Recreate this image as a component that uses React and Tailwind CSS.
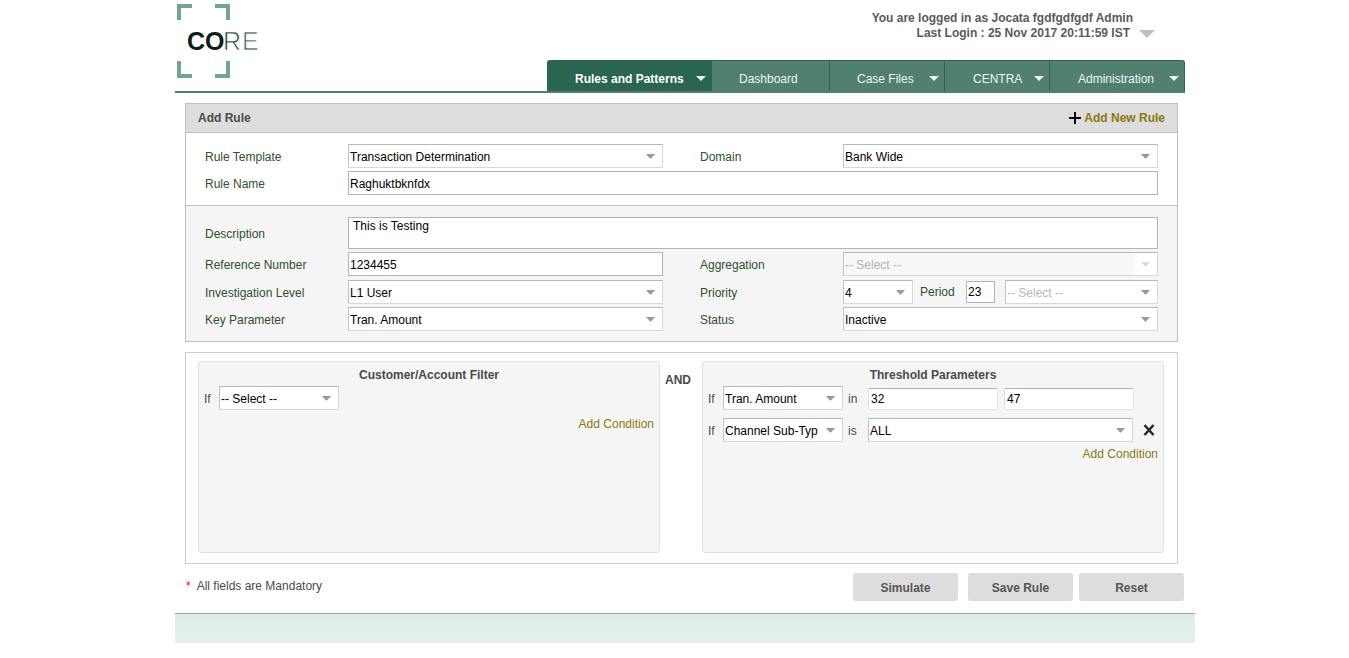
import React from "react";

const OPEN = "border-t-[#b8b8b8] border-l-[#c4c4c4] border-r-[#d8d8d8] border-b-[#d8d8d8]";

function Caret({ className }) {
  return (
    <svg viewBox="0 0 9 5" className={className} fill="currentColor" aria-hidden="true">
      <path d="M0 0H9L5 4.5H4Z" />
    </svg>
  );
}

function Select({ id, label, options, className = "", disabled = false, muted = false }) {
  return (
    <div className={"relative " + className}>
      <select
        id={id}
        aria-label={label}
        disabled={disabled}
        className={
          "block h-6 w-full appearance-none rounded-none border pl-px pr-6 pt-px opacity-100 " +
          OPEN + " " +
          (disabled ? "bg-[#f8f8f8] text-[#b0b0b0]" : muted ? "bg-white text-[#b8b8b8]" : "bg-white text-black")
        }
      >
        {options.map((o) => (
          <option key={o}>{o}</option>
        ))}
      </select>
      <span
        className={
          "pointer-events-none absolute inset-y-px right-px flex w-[22px] items-center pl-[6px] " +
          (disabled ? "bg-white text-[#dcdcdc]" : "text-[#999]")
        }
      >
        <Caret className="h-[5px] w-[9px]" />
      </span>
    </div>
  );
}

function Field({ id, label, children }) {
  return (
    <div className="flex min-w-0 flex-1 items-center">
      <label htmlFor={id} className="w-[143px] shrink-0 pt-0.5 text-[#2f4f2f]">{label}</label>
      {children}
    </div>
  );
}

const inputBase = "h-6 border border-[#b4b4b4] bg-white px-px pt-px text-black";

function NavItem({ children, caret = true, active = false, className }) {
  return (
    <a
      href="#"
      aria-current={active ? "page" : undefined}
      className={
        "flex items-center border-t border-[#2a6552] pt-1.5 " +
        (active ? "bg-[#2a6552] font-bold text-white " : "bg-[#518071] text-[#eef5f2] ") +
        className
      }
    >
      <span>{children}</span>
      {caret && (
        <svg viewBox="0 0 10 5" className="mb-px ml-auto h-[5px] w-[10px]" fill="#eef0fa" aria-hidden="true">
          <path d="M0 0H10L5 5Z" />
        </svg>
      )}
    </a>
  );
}

function Logo() {
  return (
    <svg viewBox="0 0 84 76" className="ml-[2px] mt-[3px] h-[76px] w-[84px]" role="img" aria-label="CORE">
      <g fill="none" stroke="#6fa594" strokeWidth="4">
        <path d="M15 3H2V17" />
        <path d="M38 3H51V17" />
        <path d="M15 73H2V58" />
        <path d="M38 73H51V58" />
      </g>
      <text y="47" fontFamily="Liberation Sans, sans-serif" fontSize="25" fontWeight="700" fill="#0c1c16">
        <tspan x="10">C</tspan>
        <tspan x="28">O</tspan>
      </text>
      <text y="47" fontFamily="Liberation Sans, sans-serif" fontSize="25" stroke="#fff" strokeWidth="0.7">
        <tspan x="46" fill="#1d3b30">R</tspan>
        <tspan x="65" fill="#4d685f">E</tspan>
      </text>
    </svg>
  );
}

function Condition({ id, options, joiner, children }) {
  return (
    <div className="flex h-6 items-center">
      <label htmlFor={id} className="w-[15px] shrink-0 pt-0.5">If</label>
      <Select id={id} options={options} className="w-[120px] shrink-0" />
      {joiner && <span className="w-[25px] shrink-0 pl-[5px] pt-0.5">{joiner}</span>}
      {children}
    </div>
  );
}

function ConditionPanel({ title, children }) {
  return (
    <section className="min-h-[192px] min-w-0 flex-1 rounded-[3px] border border-[#e0e0e0] bg-[#f5f5f5] px-[5px] pt-[5px]">
      <h2 className="mb-[3px] text-center font-bold leading-4">{title}</h2>
      {children}
    </section>
  );
}

const buttonClass = "h-7 w-[105px] rounded-[3px] bg-[#ddd] pt-0.5 font-bold text-[#555]";
const boundClass =
  "h-[22px] w-[130px] rounded-xs border border-[#dcdfe4] border-t-[#b0b4ba] bg-white px-[2px] text-black";

export default function App() {
  return (
    <div className="min-h-screen bg-white pl-[21px] font-['Liberation_Sans',Arial,sans-serif] text-[12px] leading-4 text-[#4a4a4a]">
      <div className="mx-auto max-w-[1020px]">
        <div className="pr-[10px]">
          <header className="flex h-[93px] justify-between border-b-2 border-[#518071]">
            <Logo />
            <div className="flex flex-col items-end justify-between">
              <div className="pr-[30px] pt-[11px] text-right font-bold leading-[15px] text-[#5a5a5a]">
                <p className="pr-[22px]">You are logged in as Jocata fgdfgdfgdf Admin</p>
                <p className="flex items-center justify-end gap-[9px]">
                  Last Login : 25 Nov 2017 20:11:59 IST
                  <button type="button" aria-label="Account menu">
                    <svg viewBox="0 0 16 8" className="h-2 w-4" fill="#c0c0c0">
                      <path d="M0 0H16L8 8Z" />
                    </svg>
                  </button>
                </p>
              </div>
              <nav className="flex h-[31px]">
                <NavItem active className="w-[165px] rounded-tl-[3px] pl-7 pr-[6px]">Rules and Patterns</NavItem>
                <NavItem caret={false} className="w-[118px] border-r pl-[27px]">Dashboard</NavItem>
                <NavItem className="w-[115px] border-r pl-[27px] pr-[5px]">Case Files</NavItem>
                <NavItem className="w-[105px] border-r pl-7 pr-[5px]">CENTRA</NavItem>
                <NavItem className="w-[135px] rounded-tr-[3px] border-r pl-7 pr-[5px]">Administration</NavItem>
              </nav>
            </div>
          </header>

          <main className="pt-[10px]">
            <div className="ml-[10px] mr-[7px]">
              <section className="border border-[#bfbfbf]">
                <div className="flex h-[29px] items-center justify-between border-b border-[#bfbfbf] bg-[#ddd] px-3 font-bold">
                  <h1 className="text-[#4a4a4a]">Add Rule</h1>
                  <a href="#" className="flex items-center gap-[3px] text-[#8a7a0a]">
                    <svg viewBox="0 0 12 12" className="size-3" stroke="#000" strokeWidth="2">
                      <path d="M6 0V12M0 6H12" />
                    </svg>
                    Add New Rule
                  </a>
                </div>
                <div className="flex flex-col gap-[3px] border-b border-[#bfbfbf] px-[19px] pb-[10px] pt-[11px]">
                  <div className="flex gap-[37px]">
                    <Field id="template" label="Rule Template">
                      <Select id="template" options={["Transaction Determination"]} className="flex-1" />
                    </Field>
                    <Field id="domain" label="Domain">
                      <Select id="domain" options={["Bank Wide"]} className="flex-1" />
                    </Field>
                  </div>
                  <Field id="name" label="Rule Name">
                    <input id="name" defaultValue="Raghuktbknfdx" className={inputBase + " min-w-0 flex-1"} />
                  </Field>
                </div>
                <div className="flex flex-col gap-[3px] bg-[#f5f5f5] px-[19px] pb-[10px] pt-[11px]">
                  <Field id="description" label="Description">
                    <textarea
                      id="description"
                      defaultValue="This is Testing"
                      className="block h-8 min-w-0 flex-1 resize-none border border-[#b4b4b4] bg-white px-1 text-black"
                    />
                  </Field>
                  <div className="mb-px flex gap-[37px]">
                    <Field id="reference" label="Reference Number">
                      <input id="reference" defaultValue="1234455" className={inputBase + " min-w-0 flex-1"} />
                    </Field>
                    <Field id="aggregation" label="Aggregation">
                      <Select id="aggregation" options={["-- Select --"]} disabled className="flex-1" />
                    </Field>
                  </div>
                  <div className="flex gap-[37px]">
                    <Field id="level" label="Investigation Level">
                      <Select id="level" options={["L1 User"]} className="flex-1" />
                    </Field>
                    <Field id="priority" label="Priority">
                      <Select id="priority" options={["4"]} className="w-[70px] shrink-0" />
                      <label htmlFor="period" className="w-[53px] shrink-0 pl-[7px] text-[#2f4f2f]">Period</label>
                      <input
                        id="period"
                        defaultValue="23"
                        className="mr-[10px] h-[22px] w-[29px] shrink-0 border border-[#b4b4b4] bg-white px-px text-black"
                      />
                      <Select label="Period unit" options={["-- Select --"]} muted className="flex-1" />
                    </Field>
                  </div>
                  <div className="flex gap-[37px]">
                    <Field id="key" label="Key Parameter">
                      <Select id="key" options={["Tran. Amount"]} className="flex-1" />
                    </Field>
                    <Field id="status" label="Status">
                      <Select id="status" options={["Inactive"]} className="flex-1" />
                    </Field>
                  </div>
                </div>
              </section>

              <div className="mt-[10px] flex border border-[#ccc] pb-[10px] pl-3 pr-[13px] pt-2">
                <ConditionPanel title="Customer/Account Filter">
                  <Condition id="filter" options={["-- Select --"]} />
                  <div className="mt-[6px] flex justify-end">
                    <a href="#" className="text-[#8a7a0a]">Add Condition</a>
                  </div>
                </ConditionPanel>
                <div className="w-[42px] shrink-0 pl-[5px] pt-[11px] font-bold">AND</div>
                <ConditionPanel title="Threshold Parameters">
                  <div className="flex flex-col gap-2">
                    <Condition id="threshold-1" options={["Tran. Amount"]} joiner="in">
                      <div className="flex gap-[6px] pt-px">
                        <input aria-label="From" defaultValue="32" className={boundClass} />
                        <input aria-label="To" defaultValue="47" className={boundClass} />
                      </div>
                    </Condition>
                    <Condition id="threshold-2" options={["Channel Sub-Typ"]} joiner="is">
                      <Select label="Channel" options={["ALL"]} className="w-[265px]" />
                      <button type="button" aria-label="Remove condition" className="ml-[10px]">
                        <svg viewBox="0 0 12 12" className="size-3" stroke="#2a2a2a" strokeWidth="2.6">
                          <path d="M1.5 1L10.5 11M10.5 1L1.5 11" />
                        </svg>
                      </button>
                    </Condition>
                  </div>
                  <div className="mt-1 flex justify-end">
                    <a href="#" className="text-[#8a7a0a]">Add Condition</a>
                  </div>
                </ConditionPanel>
              </div>
            </div>

            <div className="flex items-center justify-between pb-3 pl-[11px] pr-px pt-[9px]">
              <p className="flex gap-[6px] pb-0.5">
                <span className="text-[#f00]">*</span>
                All fields are Mandatory
              </p>
              <div className="flex gap-[6px]">
                <button type="button" className={buttonClass + " mr-1"}>Simulate</button>
                <button type="button" className={buttonClass}>Save Rule</button>
                <button type="button" className={buttonClass}>Reset</button>
              </div>
            </div>
          </main>
        </div>
        <footer className="h-[30px] border-t border-[#85aea8] bg-linear-to-b from-[#dfebea] via-[#e3eeed] via-40% to-[#e4efef]" />
      </div>
    </div>
  );
}
